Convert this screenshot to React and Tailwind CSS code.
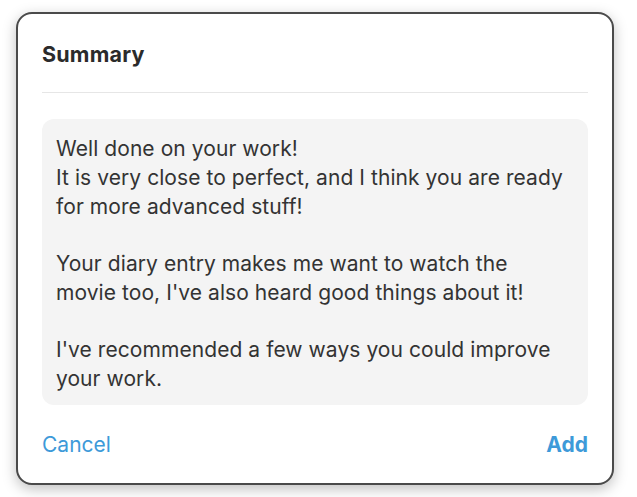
export default function App() {
  return (
    <div className="w-[637px] h-[497px] bg-white p-[12px_23px_12px_16px]" style={{ fontFamily: "Inter, 'Noto Sans', sans-serif" }}>
      <div className="w-[598px] h-[473px] rounded-[16px] border-2 border-[#4a4a4a] bg-white shadow-[0_4px_14px_rgba(0,0,0,0.25)] px-[24px] flex flex-col">
        <div className="pt-[28px] pb-[26px] border-b border-[#e6e6e6]">
          <h1 className="text-[21.5px] font-bold text-[#2b2b2b] leading-[24px] tracking-[0.2px]">Summary</h1>
        </div>
        <div className="mt-[26px] rounded-[12px] bg-[#f4f4f4] px-[14px] pt-[16px] pb-[11px] text-[21px] leading-[28.75px] tracking-[0.07px] text-[#333333]">
          <p>Well done on your work!<br />It is very close to perfect, and I think you are ready<br />for more advanced stuff!</p>
          <p className="mt-[28.75px]">Your diary entry makes me want to watch the<br />movie too, I've also heard good things about it!</p>
          <p className="mt-[28.75px]">I've recommended a few ways you could improve<br />your work.</p>
        </div>
        <div className="flex justify-between items-center mt-[26px] text-[21px] leading-[28px] text-[#3d9ad9]">
          <button>Cancel</button>
          <button className="font-bold">Add</button>
        </div>
      </div>
    </div>
  );
}
